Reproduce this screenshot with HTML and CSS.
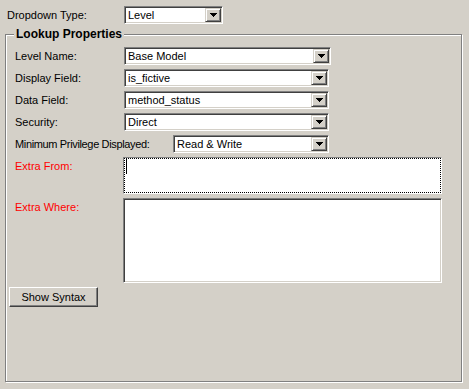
FILE: index.html
```html
<!DOCTYPE html>
<html lang="en">

<head>
    <meta charset="UTF-8">
    <title>Lookup Properties</title>
    <link rel="stylesheet" href="styles.css">
</head>

<body>
    <div class="top-row">
        <span class="top-label">Dropdown Type:</span>
        <div class="combo combo-type">
            <span class="combo-text">Level</span>
            <span class="combo-btn"><svg width="7" height="4" shape-rendering="crispEdges"><path d="M0 0h7v1H0zM1 1h5v1H1zM2 2h3v1H2zM3 3h1v1H3z" fill="#000"/></svg></span>
        </div>
    </div>

    <fieldset class="group">
        <legend>Lookup Properties</legend>

        <div class="field-row">
            <span class="field-label">Level Name:</span>
            <div class="combo combo-wide">
                <span class="combo-text">Base Model</span>
                <span class="combo-btn"><svg width="7" height="4" shape-rendering="crispEdges"><path d="M0 0h7v1H0zM1 1h5v1H1zM2 2h3v1H2zM3 3h1v1H3z" fill="#000"/></svg></span>
            </div>
        </div>

        <div class="field-row">
            <span class="field-label">Display Field:</span>
            <div class="combo combo-std">
                <span class="combo-text">is_fictive</span>
                <span class="combo-btn"><svg width="7" height="4" shape-rendering="crispEdges"><path d="M0 0h7v1H0zM1 1h5v1H1zM2 2h3v1H2zM3 3h1v1H3z" fill="#000"/></svg></span>
            </div>
        </div>

        <div class="field-row">
            <span class="field-label">Data Field:</span>
            <div class="combo combo-std">
                <span class="combo-text">method_status</span>
                <span class="combo-btn"><svg width="7" height="4" shape-rendering="crispEdges"><path d="M0 0h7v1H0zM1 1h5v1H1zM2 2h3v1H2zM3 3h1v1H3z" fill="#000"/></svg></span>
            </div>
        </div>

        <div class="field-row">
            <span class="field-label">Security:</span>
            <div class="combo combo-std">
                <span class="combo-text">Direct</span>
                <span class="combo-btn"><svg width="7" height="4" shape-rendering="crispEdges"><path d="M0 0h7v1H0zM1 1h5v1H1zM2 2h3v1H2zM3 3h1v1H3z" fill="#000"/></svg></span>
            </div>
        </div>

        <div class="field-row">
            <span class="field-label label-long">Minimum Privilege Displayed:</span>
            <div class="combo combo-priv">
                <span class="combo-text">Read &amp; Write</span>
                <span class="combo-btn"><svg width="7" height="4" shape-rendering="crispEdges"><path d="M0 0h7v1H0zM1 1h5v1H1zM2 2h3v1H2zM3 3h1v1H3z" fill="#000"/></svg></span>
            </div>
        </div>

        <div class="memo-row">
            <span class="memo-label">Extra From:</span>
            <div class="memo memo-focus memo-from"><span class="caret"></span></div>
        </div>

        <div class="memo-row">
            <span class="memo-label">Extra Where:</span>
            <div class="memo memo-where"></div>
        </div>

        <button class="btn">Show Syntax</button>
    </fieldset>
</body>

</html>
```

FILE: styles.css
```css
body {
    margin: 0;
    background: #d4d0c8;
    font-family: "Liberation Sans", Arial, sans-serif;
    font-size: 11px;
    color: #000;
    width: 469px;
    height: 389px;
    overflow: hidden;
}

.top-row {
    display: flex;
    align-items: center;
    height: 18px;
    padding: 6px 0 0 7px;
}

.top-label {
    width: 117px;
}

.combo {
    display: flex;
    align-items: stretch;
    height: 18px;
    box-sizing: border-box;
    background: #fff;
    border: 1px solid;
    border-color: #808080 #fff #fff #808080;
    box-shadow: inset 1px 1px 0 #404040, inset -1px -1px 0 #d4d0c8;
    padding: 1px;
}

.combo-type {
    width: 99px;
}

.combo-wide {
    width: 207px;
}

.combo-std {
    width: 205px;
}

.combo-priv {
    width: 156px;
}

.combo-text {
    flex: 1;
    padding-left: 2px;
    line-height: 14px;
    white-space: nowrap;
    overflow: hidden;
}

.combo-btn {
    width: 16px;
    box-sizing: border-box;
    background: #d4d0c8;
    border: 1px solid;
    border-color: #d4d0c8 #404040 #404040 #d4d0c8;
    box-shadow: inset 1px 1px 0 #fff, inset -1px -1px 0 #808080;
    display: flex;
    align-items: center;
    justify-content: center;
}

.group {
    margin: 3px 0 0 5px;
    padding: 6px 0 0 3px;
    width: 457px;
    height: 355px;
    box-sizing: border-box;
    border: 1px solid #808080;
    box-shadow: 1px 1px 0 #fff, inset 1px 1px 0 #fff;
}

.group legend {
    font-weight: bold;
    font-size: 12px;
    padding: 0 2px;
    margin-left: 5px;
    background: #d4d0c8;
}

.field-row {
    display: flex;
    align-items: center;
    height: 18px;
    margin-bottom: 4px;
    padding-left: 6px;
}

.field-label {
    width: 109px;
}

.label-long {
    width: 158px;
    letter-spacing: -0.35px;
}

.memo-row {
    display: flex;
    align-items: flex-start;
    margin-bottom: 4px;
    padding-left: 6px;
}

.memo-label {
    width: 108px;
    color: #ff0000;
    padding-top: 3px;
}

.memo {
    width: 319px;
    box-sizing: border-box;
    background: #fff;
    border: 1px solid;
    border-color: #808080 #fff #fff #808080;
}

.memo-focus {
    outline: 1px dotted #000;
    outline-offset: -2px;
    padding: 1px 0 0 2px;
}

.memo-from {
    height: 37px;
}

.memo-where {
    height: 85px;
    box-shadow: inset 1px 1px 0 #404040, inset -1px -1px 0 #d4d0c8;
}

.caret {
    display: block;
    width: 1px;
    height: 15px;
    background: #000;
}

.btn {
    display: block;
    margin-top: 1px;
    width: 89px;
    height: 20px;
    padding: 0;
    font-family: inherit;
    font-size: 11px;
    color: #000;
    background: #d4d0c8;
    border: 1px solid;
    border-color: #fff #404040 #404040 #fff;
    box-shadow: inset -1px -1px 0 #808080;
}
```
